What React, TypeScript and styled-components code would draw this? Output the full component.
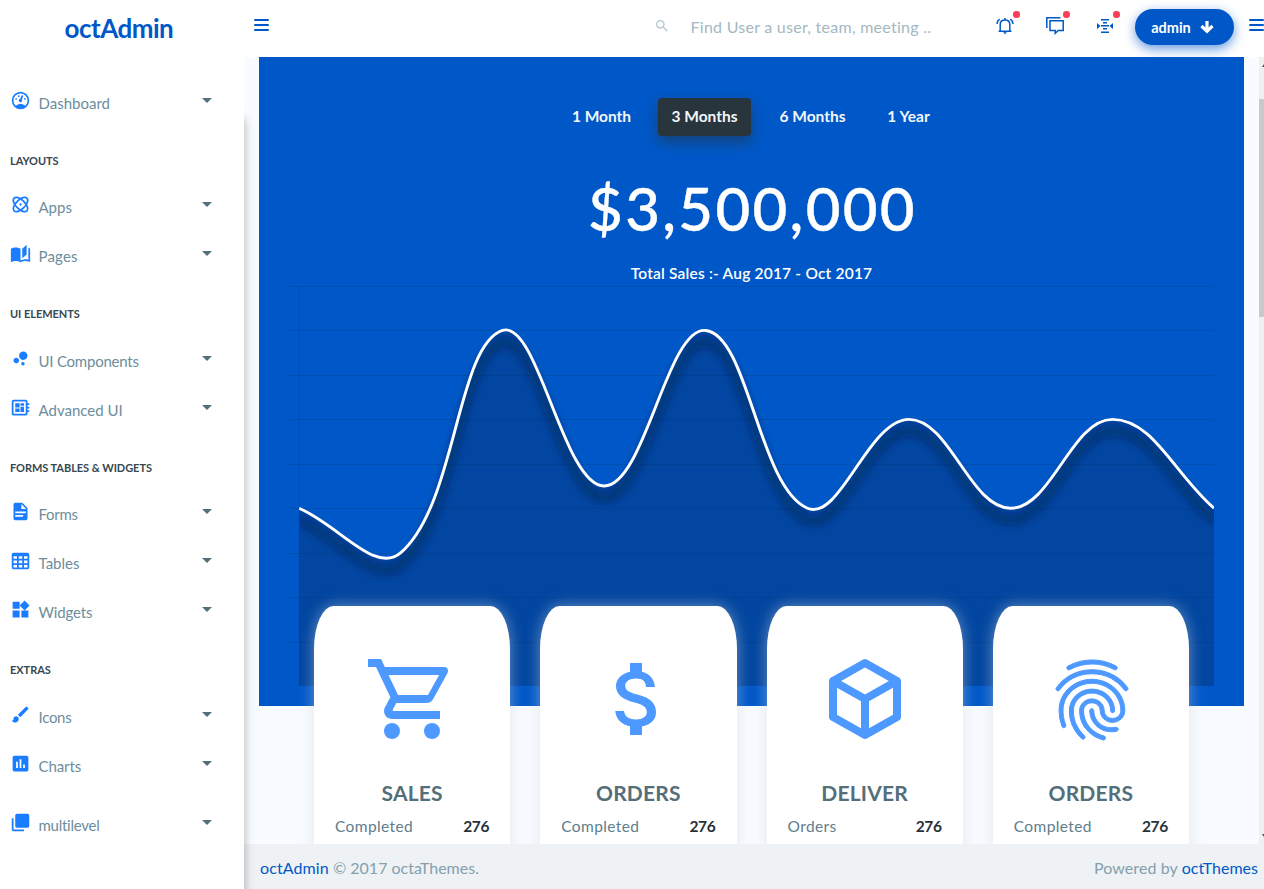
import React from 'react';
import styled, { createGlobalStyle } from 'styled-components';
import { MdAttachMoney, MdBrush, MdDeveloperBoard, MdFingerprint, MdSearch, MdWidgets } from 'react-icons/md';

const BLUE = '#0058c8';

const GlobalStyle = createGlobalStyle`
  * { box-sizing: border-box; }
  html, body { margin: 0; padding: 0; overflow: hidden; }
  body { font-family: Lato, "Open Sans", sans-serif; color: #546e7a; background: #fff; }
  svg { display: block; flex: none; }
`;

const Page = styled.div`
  display: flex;
  width: 1264px;
  height: 889px;
  overflow: hidden;
  background: #fff;
`;

const Sidebar = styled.aside`
  display: flex;
  flex-direction: column;
  width: 244px;
  flex: none;
  position: relative;
  z-index: 2;
`;

const Brand = styled.a`
  height: 57px;
  padding: 10px 0 0 64.5px;
  font-size: 26px;
  line-height: 36px;
  font-weight: 700;
  letter-spacing: -0.5px;
  color: ${BLUE};
`;

const Nav = styled.nav`
  flex: 1;
  padding-top: 19px;
  background: #fff;
  box-shadow: 1px 62px 9px rgba(0, 0, 0, 0.26);
`;

const NavHeading = styled.h6`
  margin: 0;
  height: 55.4px;
  padding: 28px 0 0 10px;
  font-size: 11px;
  line-height: 15px;
  font-weight: 700;
  letter-spacing: -0.05px;
  color: #37474f;
`;

const NavRow = styled.a<{ $gap?: boolean }>`
  display: flex;
  align-items: center;
  height: 49px;
  margin-top: ${(p) => (p.$gap ? 10 : 0)}px;
  padding: 0 32px 0 10px;
  color: #1a7dff;
`;

const NavLabel = styled.span<{ $spacing?: number }>`
  flex: 1;
  padding: 5px 0 0 7.5px;
  font-size: 15px;
  line-height: 20px;
  letter-spacing: ${(p) => p.$spacing ?? 0}px;
  color: #6d8d9b;
`;

const Caret = styled.i`
  border: 5px solid transparent;
  border-top-color: #546e7a;
  border-bottom: 0;
`;

const Main = styled.main`
  display: flex;
  flex-direction: column;
  flex: 1;
  min-width: 0;
`;

const TopBar = styled.header`
  display: flex;
  align-items: flex-start;
  height: 57px;
  flex: none;
  position: relative;
  z-index: 1;
  padding-left: 10px;
  background: #fff;
`;

const Burger = styled.button`
  display: flex;
  flex-direction: column;
  gap: 3px;
  width: 15px;
  flex: none;
  margin-top: 19px;
  padding: 0;
  border: 0;
  background: none;
  &::before, &::after, span { content: ''; height: 2px; border-radius: 1px; background: ${BLUE}; }
`;

const Search = styled.label`
  display: flex;
  margin-left: 385px;
  color: #b5c8d0;
  svg { margin-top: 18px; }
`;

const SearchInput = styled.input`
  width: 290px;
  height: 30px;
  margin: 12px 0 0 20.5px;
  padding: 0;
  border: 0;
  outline: 0;
  font: 400 16px/30px Lato, sans-serif;
  letter-spacing: 0.26px;
  color: #546e7a;
  &::placeholder { color: #a3b8c1; opacity: 1; }
`;

const Actions = styled.div`
  display: flex;
  gap: 30px;
  margin: 15px 0 0 14.2px;
`;

const IconButton = styled.button`
  position: relative;
  width: 20px;
  height: 20px;
  padding: 0;
  border: 0;
  background: none;
  color: ${BLUE};
  &::after {
    content: '';
    position: absolute;
    top: -4px;
    right: -5px;
    width: 6.5px;
    height: 6.5px;
    border-radius: 50%;
    background: #f93e5c;
  }
`;

const UserButton = styled.button`
  display: flex;
  align-items: center;
  justify-content: center;
  gap: 9px;
  width: 99px;
  height: 36px;
  margin: 9px 15px 0 20.3px;
  padding: 0 4px 0 0;
  border: 0;
  border-radius: 18px;
  background: ${BLUE};
  box-shadow: 0 4px 12px rgba(0, 88, 200, 0.6);
  font: 700 14.5px Lato, sans-serif;
  color: #fff;
`;

const Viewport = styled.div`
  display: flex;
  flex: 1;
  min-height: 0;
  overflow: hidden;
  background: #f8fbff;
`;

const Content = styled.div`
  width: 1015px;
  flex: none;
  padding: 0 15px;
`;

const Hero = styled.section`
  display: flex;
  flex-direction: column;
  align-items: center;
  height: 649px;
  padding-top: 41px;
  background: ${BLUE};
  color: #fff;
`;

const Tabs = styled.div`
  display: flex;
  gap: 15px;
`;

const Tab = styled.button<{ $active?: boolean; $width: number }>`
  width: ${(p) => p.$width}px;
  height: 38px;
  padding: 0 0 3px;
  border: 0;
  border-radius: 4px;
  background: ${(p) => (p.$active ? '#29353d' : 'transparent')};
  box-shadow: ${(p) => (p.$active ? '0 6px 14px rgba(38, 50, 56, 0.55)' : 'none')};
  font: 700 15.5px Lato, sans-serif;
  color: #f3f6f8;
`;

const Amount = styled.h1`
  margin: 30px 0 0;
  height: 84px;
  padding-left: 2px;
  font-size: 60px;
  line-height: 84px;
  font-weight: 500;
  letter-spacing: 2.3px;
  -webkit-text-stroke: 0.4px #fff;
`;

const Subtitle = styled.p`
  margin: 12px 0 0;
  height: 24px;
  font-size: 15.5px;
  line-height: 22px;
  font-weight: 600;
  letter-spacing: 0.2px;
`;

const Cards = styled.div`
  display: grid;
  grid-template-columns: repeat(4, 1fr);
  gap: 30px;
  position: relative;
  margin: -100px 55px 0;
`;

const Card = styled.article`
  display: flex;
  flex-direction: column;
  align-items: center;
  height: 430px;
  padding: 45px 21px 0;
  border-radius: 19.6px 19.6px 0 0 / 43px 43px 0 0;
  background: #fff;
  box-shadow: 0 0 15px rgba(207, 216, 222, 0.5);
  color: #4d99ff;
`;

const FingerprintIcon = styled(MdFingerprint)`
  position: relative;
  top: 0.5px;
  left: 1px;
  path:last-child {
    stroke: currentColor;
    stroke-width: 0.25px;
  }
`;

const CardTitle = styled.h3`
  margin: 30px 0 0;
  font-size: 21px;
  line-height: 32px;
  font-weight: 700;
  letter-spacing: 0.2px;
  color: #546e7a;
`;

const CardRow = styled.div`
  display: flex;
  justify-content: space-between;
  align-self: stretch;
  margin-top: 6px;
  font-size: 15.5px;
  line-height: 22px;
  letter-spacing: 0.4px;
  color: #607d8b;
  b { font-weight: 700; letter-spacing: -0.3px; color: #263238; }
`;

const ScrollTrack = styled.div`
  display: flex;
  flex-direction: column;
  justify-content: space-between;
  width: 5px;
  padding: 7px 0 7px 3px;
  background: linear-gradient(#c9c9c9, #c9c9c9) 0 42px / 5px 218px no-repeat #f0f0f0;
`;

const ScrollArrow = styled.i<{ $down?: boolean }>`
  height: 3px;
  width: 2px;
  background: #505050;
  clip-path: ${(p) => (p.$down ? 'polygon(0 0, 100% 0, 100% 100%)' : 'polygon(0 100%, 100% 100%, 100% 0)')};
`;

const Footer = styled.footer`
  display: flex;
  justify-content: space-between;
  height: 45px;
  flex: none;
  padding: 12.5px 6px 0 16px;
  background: #eef2f5;
  font-size: 16px;
  line-height: 22px;
  color: #84a0ac;
  a { color: ${BLUE}; letter-spacing: 0.1px; }
`;

const Powered = styled.span`
  letter-spacing: 0.1px;
  a { letter-spacing: 0; }
`;

type IconProps = { d: string; size?: number };
const Glyph = ({ d, size = 21 }: IconProps) => (
  <svg width={size} height={size} viewBox="0 0 24 24" fill="currentColor"><path d={d} /></svg>
);

const paths = {
  gauge: 'M17.3,18C19,16.5 20,14.4 20,12A8,8 0 0,0 12,4A8,8 0 0,0 4,12C4,14.4 5,16.5 6.7,18C8.2,16.7 10,16 12,16C14,16 15.9,16.7 17.3,18M12,2A10,10 0 0,1 22,12A10,10 0 0,1 12,22A10,10 0 0,1 2,12A10,10 0 0,1 12,2M7,9A1,1 0 0,1 8,10A1,1 0 0,1 7,11A1,1 0 0,1 6,10A1,1 0 0,1 7,9M10,6A1,1 0 0,1 11,7A1,1 0 0,1 10,8A1,1 0 0,1 9,7A1,1 0 0,1 10,6M17,9A1,1 0 0,1 18,10A1,1 0 0,1 17,11A1,1 0 0,1 16,10A1,1 0 0,1 17,9M14.4,6.1C14.9,6.3 15.1,6.9 15,7.4L13.6,10.8C13.8,11.1 14,11.5 14,12A2,2 0 0,1 12,14A2,2 0 0,1 10,12C10,11 10.7,10.2 11.7,10L13.1,6.7C13.3,6.1 13.9,5.9 14.4,6.1Z',
  book: 'M19 2L14 6.5V17.5L19 13V2M6.5 5C4.55 5 2.45 5.4 1 6.5V21.16C1 21.41 1.25 21.66 1.5 21.66C1.6 21.66 1.65 21.59 1.75 21.59C3.1 20.94 5.05 20.5 6.5 20.5C8.45 20.5 10.55 20.9 12 22C13.35 21.15 15.8 20.5 17.5 20.5C19.15 20.5 20.85 20.81 22.25 21.56C22.35 21.61 22.4 21.59 22.5 21.59C22.75 21.59 23 21.34 23 21.09V6.5C22.4 6.05 21.75 5.75 21 5.5V19C19.9 18.65 18.7 18.5 17.5 18.5C15.8 18.5 13.35 19.15 12 20V6.5C10.55 5.4 8.45 5 6.5 5Z',
  bubbles: 'M7.2,11.2C8.97,11.2 10.4,12.63 10.4,14.4C10.4,16.17 8.97,17.6 7.2,17.6C5.43,17.6 4,16.17 4,14.4C4,12.63 5.43,11.2 7.2,11.2M14.8,16A2,2 0 0,1 16.8,18A2,2 0 0,1 14.8,20A2,2 0 0,1 12.8,18A2,2 0 0,1 14.8,16M15.2,4A4.8,4.8 0 0,1 20,8.8C20,11.45 17.85,13.6 15.2,13.6A4.8,4.8 0 0,1 10.4,8.8C10.4,6.15 12.55,4 15.2,4Z',
  file: 'M13,9H18.5L13,3.5V9M6,2H14L20,8V20A2,2 0 0,1 18,22H6C4.89,22 4,21.1 4,20V4C4,2.89 4.89,2 6,2M15,18V16H6V18H15M18,14V12H6V14H18Z',
  table: 'M4,3H20A2,2 0 0,1 22,5V20A2,2 0 0,1 20,22H4A2,2 0 0,1 2,20V5A2,2 0 0,1 4,3M4,7V10H8V7H4M10,7V10H14V7H10M20,10V7H16V10H20M4,12V15H8V12H4M4,20H8V17H4V20M10,12V15H14V12H10M10,20H14V17H10V20M20,20V17H16V20H20M20,12H16V15H20V12Z',
  poll: 'M17,17H15V13H17M13,17H11V7H13M9,17H7V10H9M19,3H5A2,2 0 0,0 3,5V19A2,2 0 0,0 5,21H19A2,2 0 0,0 21,19V5A2,2 0 0,0 19,3Z',
  layers: 'M22,16A2,2 0 0,1 20,18H8C6.89,18 6,17.1 6,16V4C6,2.89 6.89,2 8,2H20A2,2 0 0,1 22,4V16M16,20V22H4A2,2 0 0,1 2,20V7H4V20H16Z',
  cart: 'M17,18A2,2 0 0,1 19,20A2,2 0 0,1 17,22C15.89,22 15,21.1 15,20C15,18.89 15.89,18 17,18M1,2H4.27L5.21,4H20A1,1 0 0,1 21,5C21,5.17 20.95,5.34 20.88,5.5L17.3,11.97C16.96,12.58 16.3,13 15.55,13H8.1L7.2,14.63L7.17,14.75A0.25,0.25 0 0,0 7.42,15H19V17H7C5.89,17 5,16.1 5,15C5,14.65 5.09,14.32 5.24,14.04L6.6,11.59L3,4H1V2M7,18A2,2 0 0,1 9,20A2,2 0 0,1 7,22C5.89,22 5,21.1 5,20C5,18.89 5.89,18 7,18M16,11L18.78,6H6.14L8.5,11H16Z',
  cube: 'M21,16.5C21,16.88 20.79,17.21 20.47,17.38L12.57,21.82C12.41,21.94 12.21,22 12,22C11.79,22 11.59,21.94 11.43,21.82L3.53,17.38C3.21,17.21 3,16.88 3,16.5V7.5C3,7.12 3.21,6.79 3.53,6.62L11.43,2.18C11.59,2.06 11.79,2 12,2C12.21,2 12.41,2.06 12.57,2.18L20.47,6.62C20.79,6.79 21,7.12 21,7.5V16.5M12,4.15L6.04,7.5L12,10.85L17.96,7.5L12,4.15M5,15.91L11,19.29V12.58L5,9.21V15.91M19,15.91V9.21L13,12.58V19.29L19,15.91Z',
};

const Atom = () => (
  <svg width="21" height="21" viewBox="0 0 24 24" fill="none" stroke="currentColor" strokeWidth="2">
    <ellipse cx="12" cy="12" rx="10.4" ry="5.2" transform="rotate(45 12 12)" />
    <ellipse cx="12" cy="12" rx="10.4" ry="5.2" transform="rotate(-45 12 12)" />
    <circle cx="12" cy="12" r="1.3" fill="currentColor" stroke="none" />
  </svg>
);

const Bell = () => (
  <svg width="20" height="20" viewBox="0 0 20 20" fill="none" stroke="currentColor" strokeWidth="1.5">
    <path d="M3.6 16.2h12.8M5.2 16V9.6C5.2 6.6 7 5 10 5s4.8 1.6 4.8 4.6V16M10 3v2" />
    <path d="M8 17.2h4L10 19.2z" fill="currentColor" stroke="none" />
    <path d="M4.6 4.2C3 5.3 2.2 6.8 2 9M15.4 4.2C17 5.3 17.8 6.8 18 9" />
  </svg>
);

const Chat = () => (
  <svg width="20" height="20" viewBox="0 0 20 20" fill="none" stroke="currentColor" strokeWidth="1.5">
    <path d="M15.5 2.8H1.8V13" />
    <path d="M5 5.8h13.2v9.7h-5l-3 2.7v-2.7H5z" />
  </svg>
);

const Align = () => (
  <svg width="20" height="20" viewBox="0 0 20 20" fill="none" stroke="currentColor" strokeWidth="1.5">
    <path d="M6 4.7h8M8 7.7h4M6 10.7h8M8 13.7h4M6 17.2h8" />
    <path d="M2 8v6l3.5-3zM18 8v6l-3.5-3z" fill="currentColor" stroke="none" />
  </svg>
);

const ArrowDown = () => (
  <svg width="14" height="14" viewBox="0 0 14 14" fill="none" stroke="#fff" strokeWidth="3.2">
    <path d="M7 1v9.5M1.5 6L7 11.2 12.5 6" />
  </svg>
);

const GRID_STEP = 44.45;
const samples = [5, 6, 1, 4.5, 1, 5, 3, 5, 3, 5];
const points = samples.map((v, i) => ({ x: 10.2 + (i * 914.8) / 9, y: v * GRID_STEP }));

const controls = points.map((cur, i) => {
  const prev = points[i - 1] ?? cur;
  const next = points[i + 1] ?? cur;
  const before = Math.hypot(cur.x - prev.x, cur.y - prev.y);
  const after = Math.hypot(next.x - cur.x, next.y - cur.y);
  const a = (0.4 * before) / (before + after);
  const b = (0.4 * after) / (before + after);
  const dx = next.x - prev.x;
  const dy = next.y - prev.y;
  return { inX: cur.x - a * dx, inY: cur.y - a * dy, outX: cur.x + b * dx, outY: cur.y + b * dy };
});

const curve = points
  .map((p, i) =>
    i === 0
      ? `M${p.x},${p.y}`
      : `C${controls[i - 1].outX},${controls[i - 1].outY} ${controls[i].inX},${controls[i].inY} ${p.x},${p.y}`,
  )
  .join('');

const SalesChart = () => (
  <svg width="925" height="400" viewBox="0 0 925 400">
    <defs>
      <clipPath id="plot"><rect x="10" y="0" width="915" height="400" /></clipPath>
      <filter id="soften" x="-5%" y="-20%" width="110%" height="140%"><feGaussianBlur stdDeviation="5" /></filter>
    </defs>
    {Array.from({ length: 9 }, (_, i) => (
      <rect key={i} x="0" y={Math.round(i * GRID_STEP)} width="925" height="1" fill="rgba(0,0,0,0.1)" />
    ))}
    <rect x="10" y="0" width="1" height="400" fill="rgba(0,0,0,0.1)" />
    <path d={`${curve}V400H10Z`} fill="rgba(5,35,80,0.32)" />
    <g clipPath="url(#plot)" fill="none">
      <path d={curve} transform="translate(0 12)" stroke="rgba(0,25,50,0.8)" strokeWidth="4.5" filter="url(#soften)" />
      <path d={curve} stroke="#fff" strokeWidth="2.9" />
    </g>
  </svg>
);

type NavItem = { label: string; icon: React.ReactNode; spacing?: number; gap?: boolean };
type NavGroup = { title?: string; items: NavItem[] };

const groups: NavGroup[] = [
  { items: [{ label: 'Dashboard', icon: <Glyph d={paths.gauge} /> }] },
  { title: 'LAYOUTS', items: [{ label: 'Apps', icon: <Atom /> }, { label: 'Pages', icon: <Glyph d={paths.book} />, spacing: 0.2 }] },
  {
    title: 'UI ELEMENTS',
    items: [
      { label: 'UI Components', icon: <Glyph d={paths.bubbles} />, spacing: -0.22 },
      { label: 'Advanced UI', icon: <MdDeveloperBoard size={21} /> },
    ],
  },
  {
    title: 'FORMS TABLES & WIDGETS',
    items: [
      { label: 'Forms', icon: <Glyph d={paths.file} />, spacing: -0.3 },
      { label: 'Tables', icon: <Glyph d={paths.table} /> },
      { label: 'Widgets', icon: <MdWidgets size={21} />, spacing: -0.15 },
    ],
  },
  {
    title: 'EXTRAS',
    items: [
      { label: 'Icons', icon: <MdBrush size={21} />, spacing: -0.3 },
      { label: 'Charts', icon: <Glyph d={paths.poll} />, spacing: -0.1 },
      { label: 'multilevel', icon: <Glyph d={paths.layers} />, spacing: -0.25, gap: true },
    ],
  },
];

const cards = [
  { title: 'SALES', label: 'Completed', icon: <Glyph d={paths.cart} size={96} /> },
  { title: 'ORDERS', label: 'Completed', icon: <MdAttachMoney size={96} /> },
  { title: 'DELIVER', label: 'Orders', icon: <Glyph d={paths.cube} size={96} /> },
  { title: 'ORDERS', label: 'Completed', icon: <FingerprintIcon size={96} /> },
];

export default function App() {
  return (
    <Page>
      <GlobalStyle />
      <Sidebar>
        <Brand>octAdmin</Brand>
        <Nav>
          {groups.map((group, i) => (
            <React.Fragment key={i}>
              {group.title && <NavHeading>{group.title}</NavHeading>}
              {group.items.map((item) => (
                <NavRow key={item.label} $gap={item.gap}>
                  {item.icon}
                  <NavLabel $spacing={item.spacing}>{item.label}</NavLabel>
                  <Caret />
                </NavRow>
              ))}
            </React.Fragment>
          ))}
        </Nav>
      </Sidebar>
      <Main>
        <TopBar>
          <Burger aria-label="Toggle navigation"><span /></Burger>
          <Search>
            <MdSearch size={16} />
            <SearchInput placeholder="Find User a user, team, meeting .." />
          </Search>
          <Actions>
            <IconButton><Bell /></IconButton>
            <IconButton><Chat /></IconButton>
            <IconButton><Align /></IconButton>
          </Actions>
          <UserButton>admin <ArrowDown /></UserButton>
          <Burger aria-label="Toggle panel"><span /></Burger>
        </TopBar>
        <Viewport>
          <Content>
            <Hero>
              <Tabs>
                <Tab $width={83}>1 Month</Tab>
                <Tab $width={93} $active>3 Months</Tab>
                <Tab $width={93}>6 Months</Tab>
                <Tab $width={69}>1 Year</Tab>
              </Tabs>
              <Amount>$3,500,000</Amount>
              <Subtitle>Total Sales :- Aug 2017 - Oct 2017</Subtitle>
              <SalesChart />
            </Hero>
            <Cards>
              {cards.map((card, i) => (
                <Card key={i}>
                  {card.icon}
                  <CardTitle>{card.title}</CardTitle>
                  <CardRow>{card.label}<b>276</b></CardRow>
                </Card>
              ))}
            </Cards>
          </Content>
          <ScrollTrack><ScrollArrow /><ScrollArrow $down /></ScrollTrack>
        </Viewport>
        <Footer>
          <span><a>octAdmin</a> © 2017 octaThemes.</span>
          <Powered>Powered by <a>octThemes</a></Powered>
        </Footer>
      </Main>
    </Page>
  );
}
